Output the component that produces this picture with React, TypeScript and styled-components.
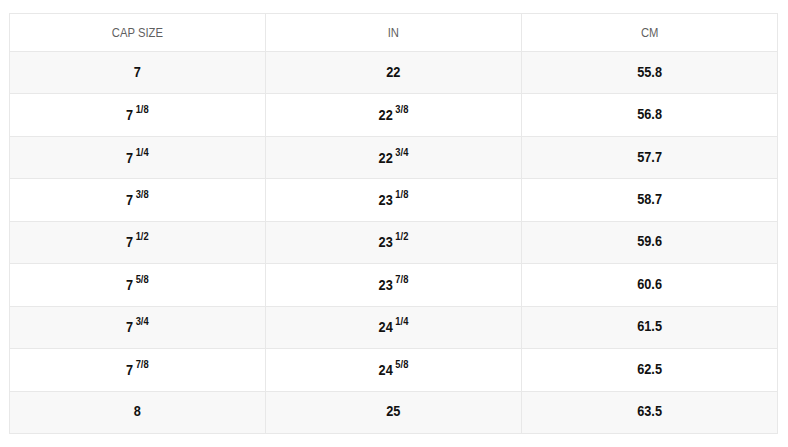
import React from "react";
import styled, { createGlobalStyle } from "styled-components";

const Global = createGlobalStyle`
  html, body { margin: 0; padding: 0; background: #fff; }
  body { font-family: "Liberation Sans", Arial, sans-serif; }
`;

const Page = styled.div`
  padding: 13px 10px 0 9px;
`;

const Table = styled.table`
  width: 769px;
  border-collapse: collapse;
  table-layout: fixed;
  border: 1px solid #e8e8e8;
`;

const HeadCell = styled.th`
  height: 37px;
  padding: 0;
  font-weight: 400;
  font-size: 12.5px;
  color: #5f5f5f;
  text-align: center;
  border: 1px solid #e8e8e8;
`;

const HeadText = styled.span`
  display: inline-block;
  transform: scaleX(0.9);
`;

const Row = styled.tr<{ $shade: boolean }>`
  background: ${(p) => (p.$shade ? "#f8f8f8" : "#fff")};
`;

const Cell = styled.td`
  height: 38.45px;
  padding: 0 0 3px;
  text-align: center;
  font-weight: 700;
  font-size: 15px;
  color: #111;
  border: 1px solid #e8e8e8;
`;

const CellText = styled.span`
  display: inline-block;
  transform: scaleX(0.85);
`;

const Frac = styled.sup`
  font-size: 11px;
  margin-left: 3px;
  position: relative;
  top: -1px;
`;

type Val = [string, string?];
const rows: [Val, Val, string][] = [
  [["7"], ["22"], "55.8"],
  [["7", "1/8"], ["22", "3/8"], "56.8"],
  [["7", "1/4"], ["22", "3/4"], "57.7"],
  [["7", "3/8"], ["23", "1/8"], "58.7"],
  [["7", "1/2"], ["23", "1/2"], "59.6"],
  [["7", "5/8"], ["23", "7/8"], "60.6"],
  [["7", "3/4"], ["24", "1/4"], "61.5"],
  [["7", "7/8"], ["24", "5/8"], "62.5"],
  [["8"], ["25"], "63.5"],
];

const Value = ({ v }: { v: Val }) => (
  <CellText>
    {v[0]}
    {v[1] ? <Frac>{v[1]}</Frac> : null}
  </CellText>
);

export default function App() {
  return (
    <>
      <Global />
      <Page>
        <Table>
          <thead>
            <tr>
              <HeadCell><HeadText>CAP SIZE</HeadText></HeadCell>
              <HeadCell><HeadText>IN</HeadText></HeadCell>
              <HeadCell><HeadText>CM</HeadText></HeadCell>
            </tr>
          </thead>
          <tbody>
            {rows.map((r, i) => (
              <Row key={i} $shade={i % 2 === 0}>
                <Cell>
                  <Value v={r[0]} />
                </Cell>
                <Cell>
                  <Value v={r[1]} />
                </Cell>
                <Cell>
                  <Value v={[r[2]]} />
                </Cell>
              </Row>
            ))}
          </tbody>
        </Table>
      </Page>
    </>
  );
}
